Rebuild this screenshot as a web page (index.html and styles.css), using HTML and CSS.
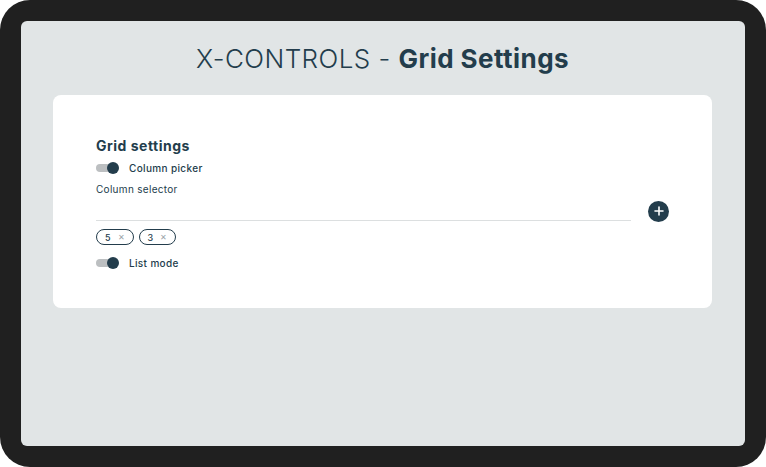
FILE: index.html
```html
<!DOCTYPE html>
<html lang="en">
<head>
    <meta charset="UTF-8">
    <meta name="viewport" content="width=device-width, initial-scale=1.0">
    <title>X-CONTROLS - Grid Settings</title>
    <link rel="stylesheet" href="styles.css">
</head>
<body>
    <div class="device">
        <div class="screen">
            <h1 class="title">X-CONTROLS - <b>Grid Settings</b></h1>

            <div class="card">
                <h2>Grid settings</h2>

                <!-- Column picker toggle -->
                <label class="toggle">
                    <span class="switch"><span class="knob"></span></span>
                    <span>Column picker</span>
                </label>

                <div class="field-label">Column selector</div>
                <div class="selector-row">
                    <div class="selector-line"></div>
                    <button class="add-btn" type="button">
                        <svg width="10" height="10" viewBox="0 0 10 10"><path d="M5 1v8M1 5h8" stroke="#fff" stroke-width="1.6" stroke-linecap="round"/></svg>
                    </button>
                </div>

                <div class="chips">
                    <span class="chip">5 <span class="x">&#x2715;</span></span>
                    <span class="chip">3 <span class="x">&#x2715;</span></span>
                </div>

                <!-- List mode toggle -->
                <label class="toggle">
                    <span class="switch"><span class="knob"></span></span>
                    <span>List mode</span>
                </label>
            </div>
        </div>
    </div>
</body>
</html>
```

FILE: styles.css
```css
body {
    margin: 0;
    background: #fff;
    font-family: "Inter", "Open Sans", sans-serif;
    color: #233d4c;
}
.device {
    width: 766px;
    height: 467px;
    box-sizing: border-box;
    padding: 21px;
    background: #202020;
    border-radius: 30px;
}
.screen {
    height: 100%;
    background: #e1e5e6;
    border-radius: 6px;
    padding: 24px 33px 0 32px;
    box-sizing: border-box;
}
.title {
    margin: 0 0 22px;
    text-align: center;
    font-size: 26px;
    font-weight: 300;
    line-height: 28px;
    letter-spacing: 0.45px;
}
.title b {
    font-weight: 700;
}
.card {
    background: #fff;
    border-radius: 8px;
    height: 213px;
    box-sizing: border-box;
    padding: 42px 43px 0 43px;
}
.card h2 {
    margin: 0 0 5px;
    font-size: 14px;
    font-weight: 700;
    line-height: 18px;
    letter-spacing: 0.5px;
}
.toggle {
    display: flex;
    align-items: center;
    gap: 13px;
    font-size: 10px;
    font-weight: 500;
    letter-spacing: 0.35px;
    height: 16px;
}
.switch {
    position: relative;
    width: 20px;
    height: 8px;
    border-radius: 4px;
    background: #bcbfc1;
}
.knob {
    position: absolute;
    right: -3px;
    top: -2px;
    width: 12px;
    height: 12px;
    border-radius: 50%;
    background: #233d4c;
}
.field-label {
    margin-top: 6px;
    font-size: 10px;
    line-height: 14px;
    letter-spacing: 0.3px;
}
.selector-row {
    display: flex;
    align-items: center;
    gap: 17px;
    height: 30px;
}
.selector-line {
    flex: 1;
    height: 1px;
    background: #dcdfe0;
    margin-top: 19px;
}
.add-btn {
    width: 21px;
    height: 21px;
    border-radius: 50%;
    border: none;
    background: #233d4c;
    padding: 0;
    display: flex;
    align-items: center;
    justify-content: center;
}
.chips {
    display: flex;
    gap: 5px;
    margin-top: 3px;
    margin-bottom: 10px;
}
.chip {
    display: inline-flex;
    align-items: center;
    gap: 7px;
    height: 16px;
    box-sizing: border-box;
    padding: 0 8px;
    border: 1px solid #233d4c;
    border-radius: 8px;
    font-size: 9px;
    font-weight: 500;
}
.chip .x {
    color: #9aa3a8;
    font-size: 8px;
}
```
